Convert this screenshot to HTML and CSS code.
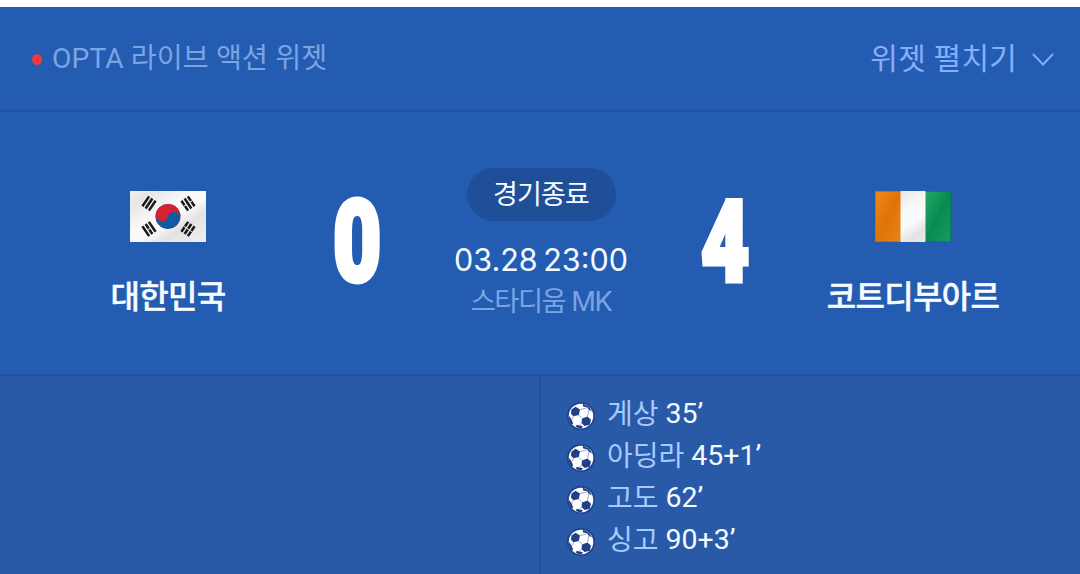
FILE: index.html
```
<!DOCTYPE html>
<html lang="ko">
<head>
    <meta charset="UTF-8">
    <meta name="viewport" content="width=device-width, initial-scale=1.0">
    <title>대한민국 0 : 4 코트디부아르</title>
    <link rel="stylesheet" href="styles.css">
</head>
<body>
    <svg class="defs" width="0" height="0" aria-hidden="true">
        <defs>
            <linearGradient id="gloss" x1="0" y1="0" x2="1" y2="1">
                <stop offset="0" stop-color="#f2f2f2"/>
                <stop offset=".15" stop-color="#e6e6e6"/>
                <stop offset=".4" stop-color="#f8f8f8"/>
                <stop offset=".55" stop-color="#fbfbfb"/>
                <stop offset=".7" stop-color="#e3e3e3"/>
                <stop offset="1" stop-color="#efefef"/>
            </linearGradient>
            <linearGradient id="orange" x1="0" y1="0" x2="1" y2="1">
                <stop offset="0" stop-color="#f18a1b"/>
                <stop offset=".5" stop-color="#df7307"/>
                <stop offset="1" stop-color="#e8851c"/>
            </linearGradient>
            <linearGradient id="green" x1="0" y1="0" x2="1" y2="1">
                <stop offset="0" stop-color="#24a869"/>
                <stop offset=".5" stop-color="#078b50"/>
                <stop offset="1" stop-color="#1c9c62"/>
            </linearGradient>
            <symbol id="ball" viewBox="0 0 28 28">
                <circle cx="14" cy="14" r="14" fill="#1f438d"/>
                <circle cx="14" cy="14" r="12.300" fill="#fff"/>
                <g fill="#203f86">
                    <path d="M4.500 7.500l4-2.700 4.500 2.700-1.200 5.600-5.300 1.100-2.500-2.500z"/>
                    <path d="M15 16.500l5.500-2 3.500 3.200-1.300 5-5.200 1.300-3-3z"/>
                    <path d="M16 1.800l6 2.600 3 5-3.200-1.600-1.500-2.300-4.500-1.200z"/>
                    <path d="M1.800 13.500l2.900 4.300 1.500 4-1.500.8A12.300 12.300 0 0 1 1.800 13.500z"/>
                    <path d="M9.500 22.800l6.500 1.400-1.500 2.100a12.300 12.300 0 0 1-5.500-1.200z"/>
                </g>
                <path d="M13 7.500l6.500-1.500M11.800 13.100l3.200 3.400M6.500 14.200l-1.800 3.600M14.500 21L12.500 23.300M20.500 14.500l1.300-6.700" fill="none" stroke="#8095be" stroke-width=".8"/>
            </symbol>
        </defs>
    </svg>

    <div class="widget">
        <header class="widget-header">
            <div class="widget-title"><span class="live-dot"></span>OPTA 라이브 액션 위젯</div>
            <div class="widget-toggle">
                위젯 펼치기
                <svg class="chevron" viewBox="0 0 22 13"><path d="M1 1l10 10.500L21 1"/></svg>
            </div>
        </header>

        <section class="scoreboard">
            <div class="team">
                <svg class="flag" viewBox="0 0 76 51">
                    <rect width="76" height="51" fill="url(#gloss)"/>
                    <g transform="rotate(4 38 25.500)">
                        <circle cx="38" cy="25.500" r="12.500" fill="#125a9f"/>
                        <path d="M25.500 25.500a12.500 12.500 0 0 1 25 0a6.250 5 0 0 0-12.500 0a6.250 5 0 0 1-12.500 0z" fill="#d4222f"/>
                    </g>
                    <g stroke="#181818" stroke-width="2.500">
                        <g transform="translate(19 12.500) rotate(-56)"><path d="M-6-3.900H6M-6 0H6M-6 3.900H6"/></g>
                        <g transform="translate(58 38) rotate(-56)"><path d="M-6-3.900H6M-6 0H6M-6 3.900H6"/><path d="M0-5.200V5.200" stroke="#ddd" stroke-width="1"/></g>
                        <g transform="translate(58 12.500) rotate(56)"><path d="M-6-3.900H6M-6 0H6M-6 3.900H6"/><path d="M0-5.200V-2M0 2V5.200" stroke="#eee" stroke-width="1"/></g>
                        <g transform="translate(19 38) rotate(56)"><path d="M-6-3.900H6M-6 0H6M-6 3.900H6"/><path d="M0-1.500V1.500" stroke="#eee" stroke-width="1"/></g>
                    </g>
                </svg>
                <div class="team-name">대한민국</div>
            </div>
            <div class="score"><span>0</span></div>
            <div class="match-info">
                <div class="status">경기종료</div>
                <div class="date">03.28 23:00</div>
                <div class="stadium">스타디움 MK</div>
            </div>
            <div class="score"><span>4</span></div>
            <div class="team">
                <svg class="flag" viewBox="0 0 76 51">
                    <rect width="76" height="51" fill="url(#gloss)"/>
                    <rect width="25.500" height="51" fill="url(#orange)"/>
                    <rect x="50.500" width="25.500" height="51" fill="url(#green)"/>
                    <path d="M25.500.500H.5v50h25" fill="none" stroke="#a9652f" stroke-opacity=".65"/>
                    <path d="M50.500.500h25v50h-25" fill="none" stroke="#08734f" stroke-opacity=".65"/>
                </svg>
                <div class="team-name">코트디부아르</div>
            </div>
        </section>

        <section class="goals">
            <ul class="goal-list"></ul>
            <ul class="goal-list">
                <li><svg class="ball"><use href="#ball"/></svg><span class="player">게상</span><span class="minute">35’</span></li>
                <li><svg class="ball"><use href="#ball"/></svg><span class="player">아딩라</span><span class="minute">45+1’</span></li>
                <li><svg class="ball"><use href="#ball"/></svg><span class="player">고도</span><span class="minute">62’</span></li>
                <li><svg class="ball"><use href="#ball"/></svg><span class="player">싱고</span><span class="minute">90+3’</span></li>
            </ul>
        </section>
    </div>
</body>
</html>
```

FILE: styles.css
```
* {
    margin: 0;
    padding: 0;
    box-sizing: border-box;
}

body {
    font-family: Roboto, 'Noto Sans CJK KR', sans-serif;
    background: #fff;
    padding-top: 7px;
    overflow: hidden;
}

.defs {
    display: block;
}

.widget {
    height: 567px;
    display: flex;
    flex-direction: column;
    background: #245cb2;
    border-top: 1px solid #2d5795;
}

.widget-header {
    height: 104px;
    padding: 0 26px 0 32px;
    display: flex;
    align-items: center;
    justify-content: space-between;
    border-bottom: 2px solid #2153a2;
    font-size: 28px;
    line-height: 40px;
}

.widget-title {
    display: flex;
    align-items: center;
    color: #7ba4e3;
    font-size: 28.2px;
    letter-spacing: 0.1px;
    white-space: pre;
}

.live-dot {
    width: 10px;
    height: 11px;
    margin-right: 10px;
    border-radius: 50%;
    background: #f03a3e;
}

.widget-toggle {
    display: flex;
    align-items: center;
    gap: 15px;
    color: #86aefa;
    font-size: 30px;
    letter-spacing: 0.2px;
}

.chevron {
    width: 22px;
    height: 13px;
    fill: none;
    stroke: #86aefa;
    stroke-width: 1.9;
}

.scoreboard {
    height: 264px;
    display: grid;
    grid-template-columns: 336px 42px 326px 42px 334px;
    border-bottom: 2px solid #20519f;
}

.team {
    padding-top: 79px;
    display: flex;
    flex-direction: column;
    align-items: center;
    gap: 34px;
}

.flag {
    width: 76px;
    height: 51px;
}

.team-name {
    color: #f6fcff;
    font-size: 32px;
    font-weight: 500;
    line-height: 42px;
    letter-spacing: -0.7px;
    white-space: nowrap;
    -webkit-text-stroke: 0.4px #f6fcff;
}

.score {
    padding-top: 59px;
    display: flex;
    justify-content: center;
    color: #fff;
    font-size: 114px;
    font-weight: 900;
    line-height: 142px;
    -webkit-text-stroke: 5px #fff;
}

.score span {
    transform: scaleX(0.73);
}

.match-info {
    padding-top: 56px;
    display: flex;
    flex-direction: column;
    align-items: center;
}

.status {
    width: 149px;
    height: 53px;
    border-radius: 27px;
    background: #1f4f99;
    color: #f6fcff;
    font-size: 27px;
    line-height: 54px;
    text-align: center;
    letter-spacing: -0.8px;
}

.date {
    margin-top: 19px;
    color: #f2faff;
    font-family: Inter, sans-serif;
    font-size: 30.5px;
    line-height: 40px;
    word-spacing: -3px;
}

.stadium {
    color: #7ba4e3;
    font-family: Inter, 'Noto Sans CJK KR', sans-serif;
    font-size: 27.3px;
    line-height: 43px;
    letter-spacing: -1.5px;
}

.goals {
    flex: 1;
    display: grid;
    grid-template-columns: 541px 1fr;
    background: #285aa7;
}

.goal-list {
    list-style: none;
    padding: 17px 0 0 26px;
}

.goal-list:first-child {
    border-right: 2px solid #20519d;
}

.goal-list li {
    height: 42px;
    display: flex;
    align-items: center;
    font-size: 28px;
    line-height: 42px;
}

.ball {
    width: 28px;
    height: 28px;
    margin: 3px 12px 0 0;
}

.player {
    color: #a5caff;
    margin-right: 7px;
    padding-top: 1px;
}

.minute {
    color: #f2faff;
    font-size: 28.5px;
}
```
